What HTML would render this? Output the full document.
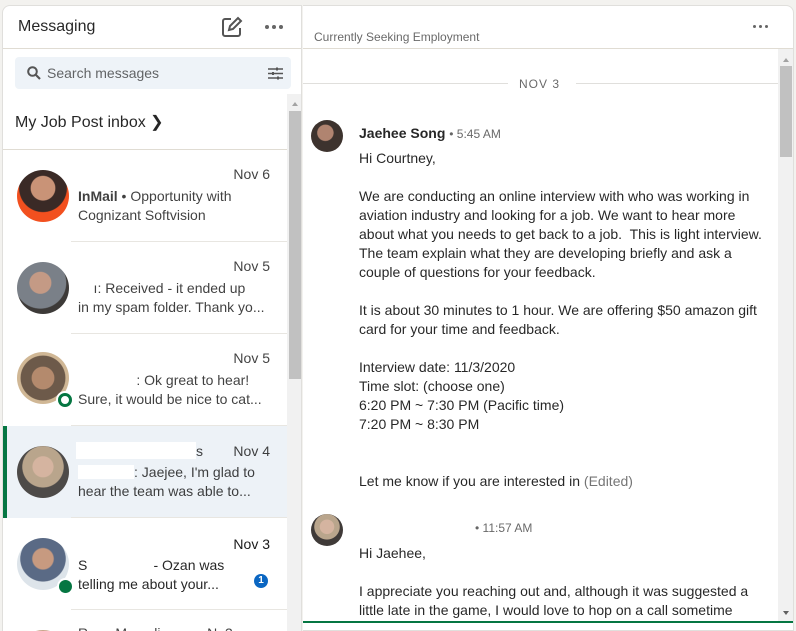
<!DOCTYPE html>
<html><head><meta charset="utf-8"><style>
*{margin:0;padding:0;box-sizing:border-box}
html,body{width:796px;height:631px;overflow:hidden}
body{background:#f3f2ef;font-family:"Liberation Sans",Arial,sans-serif;color:rgba(0,0,0,.9);position:relative}
.abs{position:absolute}
#left{left:2px;top:5px;width:300px;height:626px;background:#fff;border-radius:8px 0 0 0;border:1px solid #e0dfdc;border-bottom:none;overflow:hidden}
#right{left:303px;top:5px;width:491px;height:626px;background:#fff;border-radius:0 8px 0 0;border:1px solid #e0dfdc;border-left:none;overflow:hidden}
.item{position:absolute;left:0;width:284px;height:92px}
.sep{position:absolute;left:68px;right:0;bottom:0;height:1px;background:#e8e6e1}
.av{position:absolute;left:14px;width:52px;height:52px;border-radius:50%}
.t{position:absolute;font-size:14px;line-height:19px;color:rgba(0,0,0,.75);white-space:nowrap}
.d{position:absolute;right:17px;font-size:14px;color:rgba(0,0,0,.75)}
.m{position:absolute;left:56px;font-size:14px;line-height:19px;color:rgba(0,0,0,.85);white-space:nowrap}
.dots{position:absolute;display:flex;gap:3px}
.dots i{display:block;width:4px;height:4px;border-radius:50%;background:#666}
</style></head><body>
<div id="left" class="abs">
 <div class="abs" style="left:15px;top:12px;font-size:16px;color:rgba(0,0,0,.85)">Messaging</div>
 <svg class="abs" style="left:218px;top:10px" width="22" height="22" viewBox="0 0 22 22"><path d="M10 3H4a2 2 0 0 0-2 2v13a2 2 0 0 0 2 2h13a2 2 0 0 0 2-2v-6" fill="none" stroke="#555" stroke-width="2"/><path d="M8 14l1-4 8-8 3 3-8 8z" fill="none" stroke="#555" stroke-width="2"/></svg>
 <div class="dots" style="left:262px;top:19px"><i></i><i></i><i></i></div>
 <div class="abs" style="left:0;top:42px;width:300px;height:1px;background:#e0dcd3"></div>
 <div class="abs" style="left:12px;top:51px;width:276px;height:32px;background:#eef3f8;border-radius:4px"></div>
 <svg class="abs" style="left:24px;top:60px" width="14" height="14" viewBox="0 0 14 14"><circle cx="5.5" cy="5.5" r="4.3" fill="none" stroke="#555" stroke-width="2"/><path d="M9 9l4 4" stroke="#555" stroke-width="2.2"/></svg>
 <div class="abs" style="left:44px;top:59px;font-size:14px;color:rgba(0,0,0,.6)">Search messages</div>
 <svg class="abs" style="left:265px;top:60px" width="15" height="15" viewBox="0 0 15 15"><path d="M0 3h15M0 7.5h15M0 12h15" stroke="#555" stroke-width="1.5"/><rect x="8" y="1.5" width="2" height="3" fill="#555"/><rect x="4" y="6" width="2" height="3" fill="#555"/><rect x="9" y="10.5" width="2" height="3" fill="#555"/></svg>
 <div class="abs" style="left:12px;top:106px;font-size:16px;color:rgba(0,0,0,.85)">My Job Post inbox ❯</div>
 <div class="abs" style="left:0;top:143px;width:284px;height:1px;background:#e0dcd3"></div>
 <div class="abs" style="left:284px;top:88px;width:16px;height:540px;background:#f1f1f1"></div>
 <div class="abs" style="left:286px;top:105px;width:12px;height:268px;background:#c1c1c1"></div>
 <div class="abs" style="left:289px;top:93px;width:0;height:0;border:3px solid transparent;border-bottom:4px solid #a3a3a3"></div>

 <div class="item" style="top:144px"><div class="av" style="top:20px;background:radial-gradient(circle at 50% 35%,#c99377 0 28%,#3a2a26 30% 55%,#f2501f 57%)"></div>
  <div class="d" style="top:16px">Nov 6</div>
  <div class="t" style="left:75px;top:37px"><b style="font-weight:600">InMail</b> • Opportunity with</div>
  <div class="t" style="left:75px;top:56px">Cognizant Softvision</div><div class="sep"></div></div>
 <div class="item" style="top:236px"><div class="av" style="top:20px;background:radial-gradient(circle at 45% 40%,#c49a85 0 25%,#7a8088 27% 60%,#3d3a38 62%)"></div>
  <div class="d" style="top:16px">Nov 5</div>
  <div class="t" style="left:75px;top:37px">&nbsp;&nbsp;&nbsp;&nbsp;ı: Received - it ended up</div>
  <div class="t" style="left:75px;top:56px">in my spam folder. Thank yo...</div><div class="sep"></div></div>
 <div class="item" style="top:328px"><div class="av" style="top:18px;background:radial-gradient(circle at 50% 50%,#b48a6d 0 30%,#6d5a4a 32% 60%,#d0b795 62%)"></div>
  <div class="abs" style="left:55px;top:59px;width:14px;height:14px;border-radius:50%;background:#fff;border:3px solid #057642;box-shadow:0 0 0 2px #fff"></div>
  <div class="d" style="top:16px">Nov 5</div>
  <div class="t" style="left:75px;top:37px">&nbsp;&nbsp;&nbsp;&nbsp;&nbsp;&nbsp;&nbsp;&nbsp;&nbsp;&nbsp;&nbsp;&nbsp;&nbsp;&nbsp;&nbsp;: Ok great to hear!</div>
  <div class="t" style="left:75px;top:56px">Sure, it would be nice to cat...</div><div class="sep"></div></div>
 <div class="item" style="top:420px;background:#edf2f7"><div class="abs" style="left:0;top:0;width:4px;height:92px;background:#057642"></div>
  <div class="av" style="top:20px;background:radial-gradient(circle at 50% 40%,#d5b4a0 0 25%,#b9a58c 27% 50%,#4d4a48 52%)"></div>
  <div class="d" style="top:17px">Nov 4</div>
  <div class="t" style="left:73px;top:16px"><span style="background:#fff;display:inline-block;width:120px;height:17px;vertical-align:-3px"></span>s</div>
  <div class="t" style="left:75px;top:37px"><span style="background:#fff;display:inline-block;width:56px;height:14px;vertical-align:-2px"></span>: Jaejee, I'm glad to</div>
  <div class="t" style="left:75px;top:56px">hear the team was able to...</div><div class="sep"></div></div>
 <div class="item" style="top:512px"><div class="av" style="top:20px;background:radial-gradient(circle at 50% 40%,#c79a80 0 25%,#5a6a85 28% 55%,#dde4ea 57%)"></div>
  <div class="abs" style="left:56px;top:62px;width:13px;height:13px;border-radius:50%;background:#057642;box-shadow:0 0 0 2px #fff"></div>
  <div class="d" style="top:18px;color:rgba(0,0,0,.9)">Nov 3</div>
  <div class="t" style="left:75px;top:38px;color:rgba(0,0,0,.85)">S&nbsp;&nbsp;&nbsp;&nbsp;&nbsp;&nbsp;&nbsp;&nbsp;&nbsp;&nbsp;&nbsp;&nbsp;&nbsp;&nbsp;&nbsp;&nbsp; - Ozan was</div>
  <div class="t" style="left:75px;top:57px;color:rgba(0,0,0,.85)">telling me about your...</div>
  <div class="abs" style="left:251px;top:56px;width:14px;height:14px;border-radius:50%;background:#0a66c2;color:#fff;font-size:10px;text-align:center;line-height:14px;font-weight:bold">1</div>
  <div class="sep"></div></div>
 <div class="item" style="top:604px"><div class="av" style="top:20px;background:#c9a58a"></div>
  <div class="t" style="left:75px;top:14px">R&nbsp;&nbsp;&nbsp;&nbsp;&nbsp;&nbsp; M&nbsp;&nbsp;&nbsp;&nbsp;&nbsp;&nbsp; li&nbsp;&nbsp;&nbsp;&nbsp;&nbsp;&nbsp;&nbsp;&nbsp;&nbsp;&nbsp;&nbsp; N&nbsp; 3</div></div>
</div>

<div id="right" class="abs">
 <div class="abs" style="left:11px;top:24px;font-size:12px;color:rgba(0,0,0,.6)">Currently Seeking Employment</div>
 <div class="dots" style="left:450px;top:19px"><i style="width:3px;height:3px"></i><i style="width:3px;height:3px"></i><i style="width:3px;height:3px"></i></div>
 <div class="abs" style="left:0;top:42px;width:491px;height:1px;background:#e0dcd3"></div>
 <div class="abs" style="left:0;top:77px;width:205px;height:1px;background:#e0dfdc"></div>
 <div class="abs" style="left:216px;top:71px;font-size:12px;letter-spacing:1px;color:rgba(0,0,0,.6)">NOV 3</div>
 <div class="abs" style="left:273px;top:77px;width:202px;height:1px;background:#e0dfdc"></div>
 <div class="abs" style="left:475px;top:43px;width:16px;height:573px;background:#f1f1f1"></div>
 <div class="abs" style="left:477px;top:60px;width:12px;height:91px;background:#c1c1c1"></div>
 <div class="abs" style="left:480px;top:49px;width:0;height:0;border:3px solid transparent;border-bottom:4px solid #a3a3a3"></div>
 <div class="abs" style="left:480px;top:605px;width:0;height:0;border:3px solid transparent;border-top:4px solid #606060"></div>
 <div class="abs" style="left:0;top:615px;width:491px;height:2px;background:#057642"></div>

 <div class="abs" style="left:8px;top:114px;width:32px;height:32px;border-radius:50%;background:radial-gradient(circle at 45% 40%,#b08470 0 30%,#3d332e 33%)"></div>
 <div class="m" style="top:118px;font-weight:600">Jaehee Song <span style="font-weight:normal;font-size:12px;color:rgba(0,0,0,.6)">• 5:45 AM</span></div>
 <div class="m" style="top:143px">Hi Courtney,<br><br>We are conducting an online interview with who was working in<br>aviation industry and looking for a job. We want to hear more<br>about what you needs to get back to a job.&nbsp; This is light interview.<br>The team explain what they are developing briefly and ask a<br>couple of questions for your feedback.<br><br>It is about 30 minutes to 1 hour. We are offering $50 amazon gift<br>card for your time and feedback.<br><br>Interview date: 11/3/2020<br>Time slot: (choose one)<br>6:20 PM ~ 7:30 PM (Pacific time)<br>7:20 PM ~ 8:30 PM<br><br><br>Let me know if you are interested in <span style="color:rgba(0,0,0,.55)">(Edited)</span></div>

 <div class="abs" style="left:8px;top:508px;width:32px;height:32px;border-radius:50%;background:radial-gradient(circle at 50% 40%,#d5b4a0 0 28%,#b9a58c 30% 50%,#3f3a38 52%)"></div>
 <div class="m" style="top:513px;left:172px;font-size:12px;color:rgba(0,0,0,.6)">• 11:57 AM</div>
 <div class="m" style="top:538px">Hi Jaehee,<br><br>I appreciate you reaching out and, although it was suggested a<br>little late in the game, I would love to hop on a call sometime</div>
</div>
</body></html>
